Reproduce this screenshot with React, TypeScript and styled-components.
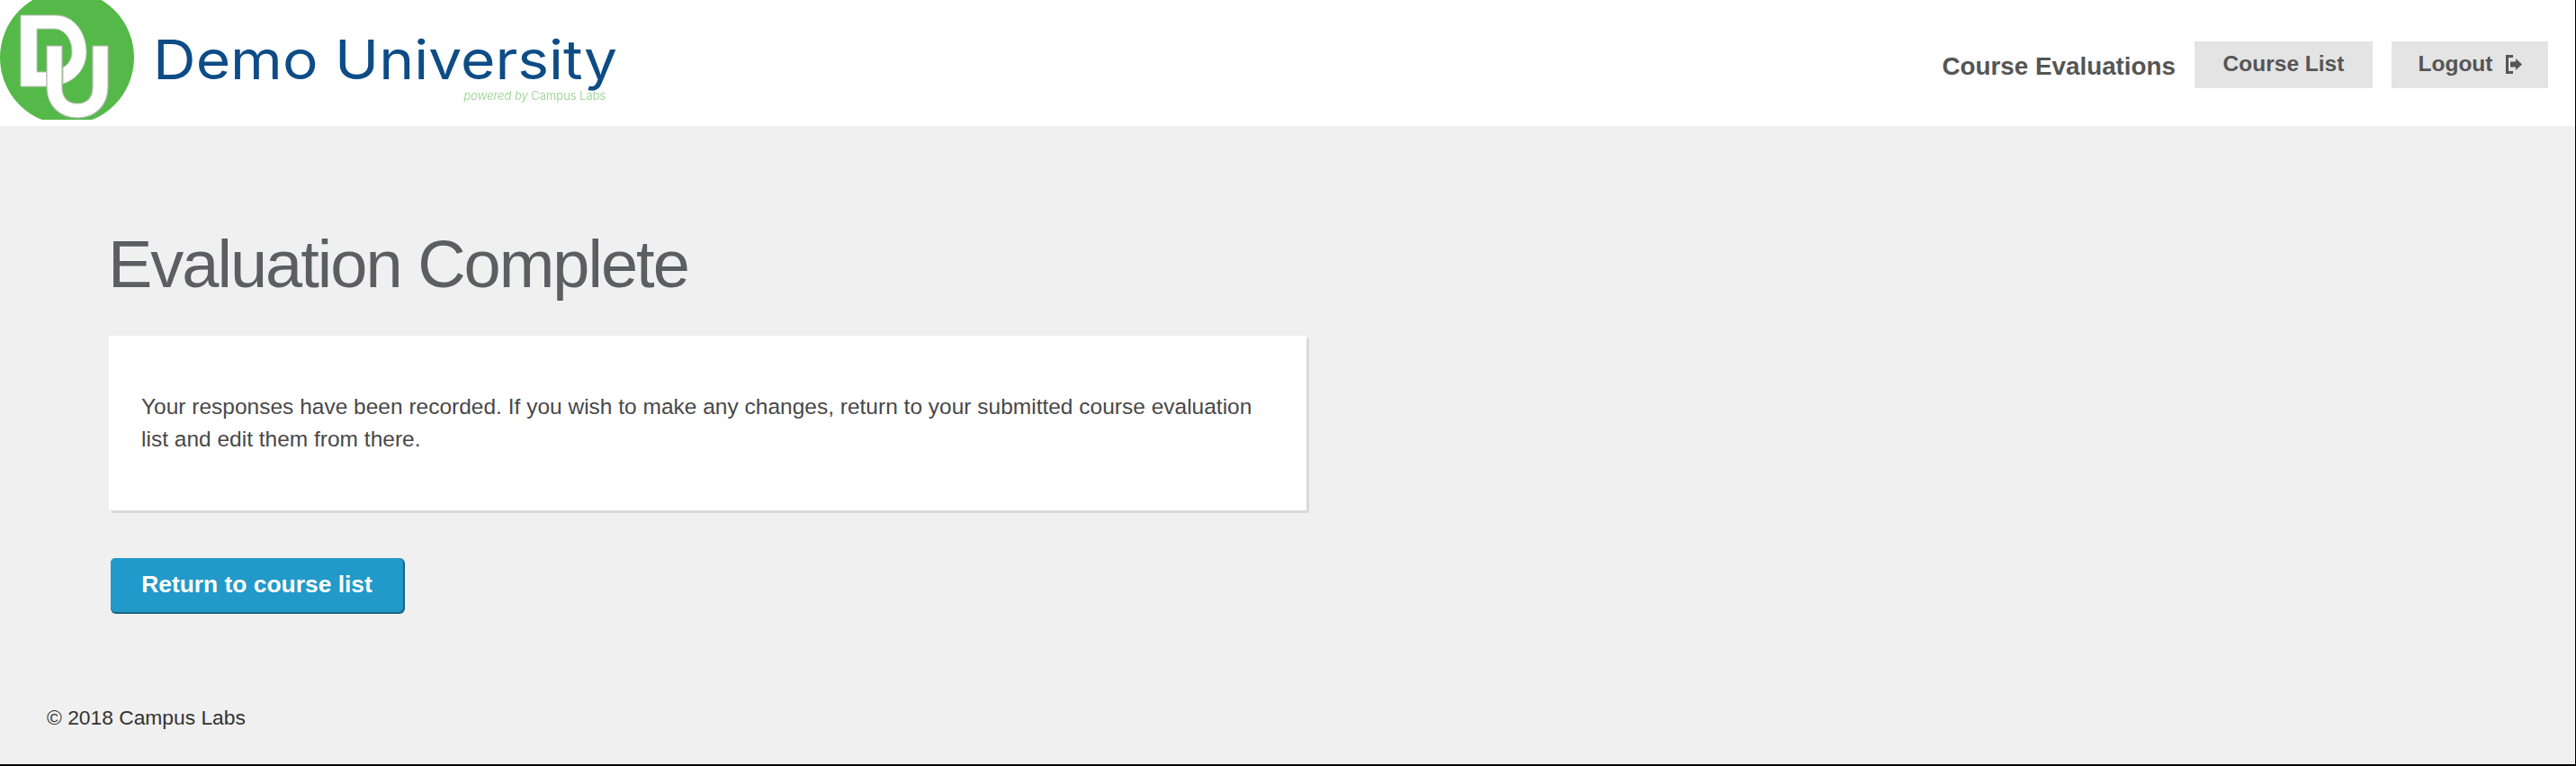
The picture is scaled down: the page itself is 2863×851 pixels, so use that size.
import { FC } from 'react'
import styled, { createGlobalStyle } from 'styled-components'

const GlobalStyle = createGlobalStyle`
  html, body {
    margin: 0;
    padding: 0;
    height: 100%;
    background: #f0f0f0;
  }
  #root {
    height: 100%;
  }
`

const LogoMark: FC = () => (
  <LogoSvg viewBox="0 0 150 133" width="150" height="133">
    <circle cx="74.5" cy="64" r="74.5" fill="#54b948" />
    <path
      d="M23 17 H62 C82 17 96 36 96 58 C96 74 86 88 70 93 V75 C77 71 80 65 80 57 C80 44 72 32 60 32 H41 V80 H52 V96 H23 Z"
      fill="#fff"
      stroke="#c4c4c4"
      strokeWidth="1"
    />
    <path
      d="M52 51 H69 V97 C69 108 75 115 86 115 C97 115 103 108 103 97 V51 H120 V97 C120 117 106 131 86 131 C66 131 52 117 52 97 Z"
      fill="#fff"
      stroke="#b8b8b8"
      strokeWidth="1.2"
    />
  </LogoSvg>
)

const LogoutIcon: FC = () => (
  <IconSvg viewBox="0 0 18 21" width="18" height="21">
    <path d="M8 0 H0 V21 H8 V18 H3 V3 H8 Z" fill="#555" />
    <path d="M5 7.5 H11 V4 L18 10.5 L11 17 V13.5 H5 Z" fill="#555" />
  </IconSvg>
)

const App: FC = () => {
  return (
    <Page>
      <GlobalStyle />
      <Header>
        <Brand>
          <LogoMark />
          <Wordmark>
            <UniversityName>Demo University</UniversityName>
            <PoweredBy>
              <em>powered by</em> Campus Labs
            </PoweredBy>
          </Wordmark>
        </Brand>
        <Nav>
          <NavTitle>Course Evaluations</NavTitle>
          <NavButton $width={198}>Course List</NavButton>
          <NavButton $width={174} $gap={21}>
            Logout
            <LogoutIcon />
          </NavButton>
        </Nav>
      </Header>
      <Main>
        <Title>Evaluation Complete</Title>
        <Card>
          <CardText>
            Your responses have been recorded. If you wish to make any changes, return to your
            submitted course evaluation list and edit them from there.
          </CardText>
        </Card>
        <ReturnButton>Return to course list</ReturnButton>
      </Main>
      <Footer>© 2018 Campus Labs</Footer>
    </Page>
  )
}

const Page = styled.div`
  box-sizing: border-box;
  height: 851px;
  width: 2863px;
  overflow: hidden;
  display: flex;
  flex-direction: column;
  background: #f0f0f0;
  border-right: 1px solid #000;
  border-bottom: 2px solid #000;
  font-family: "Liberation Sans", Arial, sans-serif;
`

const Header = styled.header`
  flex: none;
  height: 140px;
  background: #fff;
  display: flex;
  justify-content: space-between;
  padding-right: 30px;
`

const Brand = styled.div`
  display: flex;
  height: 133px;
  filter: blur(0.4px);
`

const LogoSvg = styled.svg`
  display: block;
  flex: none;
`

const Wordmark = styled.div`
  margin-left: 20px;
  display: flex;
  flex-direction: column;
  align-items: flex-end;
  padding-top: 31px;
`

// the logo lettering is wider than any installed face, so stretch it a bit
const UniversityName = styled.div`
  font-family: Inter, sans-serif;
  font-weight: 400;
  font-size: 60px;
  line-height: 70px;
  color: #0d4c86;
  white-space: nowrap;
  transform: scaleX(1.1);
  transform-origin: left center;
`

const PoweredBy = styled.div`
  margin: -2px -34px 0 0;
  font-family: Inter, sans-serif;
  font-weight: 300;
  font-size: 13px;
  line-height: 14px;
  color: #8fd186;
  white-space: nowrap;
`

const Nav = styled.nav`
  display: flex;
  align-items: flex-start;
  padding-top: 46px;
`

const NavTitle = styled.div`
  margin-right: 21px;
  font-size: 27.8px;
  font-weight: 700;
  line-height: 56px;
  color: #555;
  white-space: nowrap;
`

const NavButton = styled.button<{ $width: number; $gap?: number }>`
  box-sizing: border-box;
  width: ${p => p.$width}px;
  height: 52px;
  margin-left: ${p => p.$gap ?? 0}px;
  padding: 0 0 2px;
  border: 0;
  background: #e4e4e4;
  color: #555;
  font-family: inherit;
  font-size: 24.5px;
  font-weight: 700;
  display: flex;
  align-items: center;
  justify-content: center;
`

const IconSvg = styled.svg`
  display: block;
  margin-left: 14px;
`

const Main = styled.main`
  flex: 1;
  padding: 0 0 0 121px;
`

const Title = styled.h1`
  margin: 0 0 0 -1px;
  padding-top: 112px;
  font-size: 74px;
  line-height: 84px;
  font-weight: 400;
  letter-spacing: -2px;
  color: #5b5e62;
  white-space: nowrap;
`

const Card = styled.div`
  box-sizing: border-box;
  margin-top: 37px;
  width: 1331px;
  height: 194px;
  padding: 61px 36px 0;
  background: #fff;
  box-shadow: 3px 3px 0 #d9d9d9;
`

const CardText = styled.p`
  margin: 0;
  font-size: 24.5px;
  line-height: 36px;
  color: #484848;
`

const ReturnButton = styled.button`
  display: block;
  box-sizing: border-box;
  margin: 53px 0 0 2px;
  width: 325px;
  height: 60px;
  border: 0;
  border-radius: 5px;
  padding: 0 0 2px;
  background: #2199c9;
  box-shadow: 1px 1px 0 1px #1b6685;
  color: #fff;
  font-family: inherit;
  font-size: 26.4px;
  font-weight: 700;
`

const Footer = styled.footer`
  flex: none;
  height: 65px;
  padding-left: 52px;
  font-size: 22.8px;
  line-height: 26px;
  color: #333;
`

export default App
